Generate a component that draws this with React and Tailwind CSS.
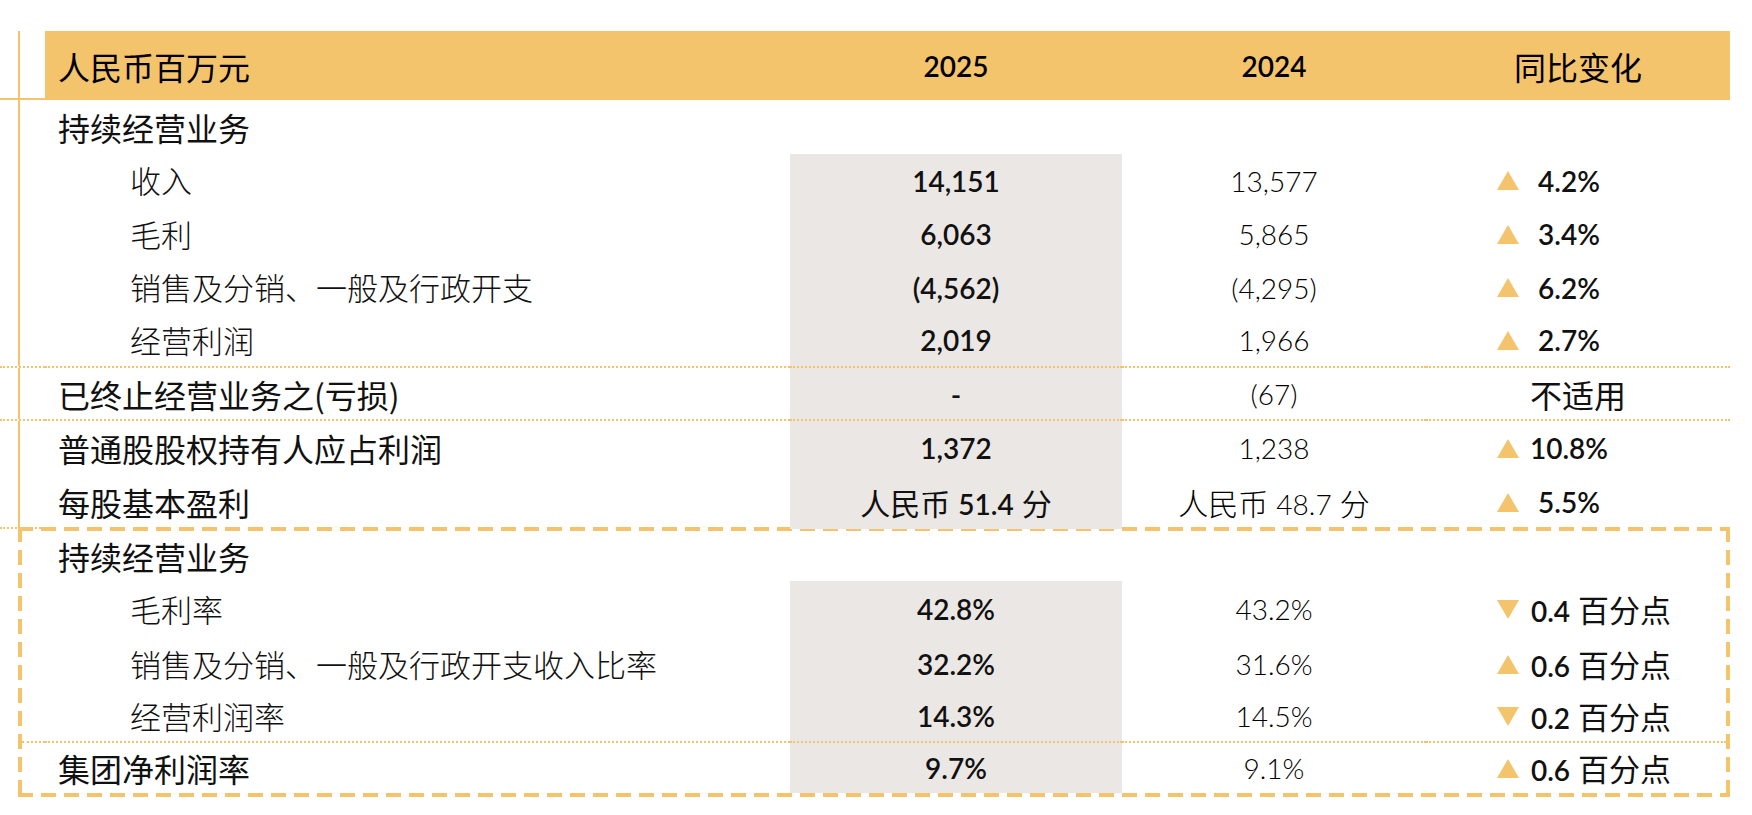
import React from 'react';

// colours taken from the slide
const LINE = 'border-b-2 border-dotted border-[#f4c46c]';
const NUM = "font-['Lato','Noto_Sans_CJK_SC',sans-serif] text-[28px]";
const CJK = "font-['Noto_Sans_CJK_SC',sans-serif]";

const Tri = ({ dir }) => (
    <svg width="22" height="19" viewBox="0 0 22 19" className="shrink-0">
        {dir === 'up' ? (
            <path d="M11 0 L22 19 L0 19 Z" fill="#f4c46c" />
        ) : (
            <path d="M0 0 L22 0 L11 19 Z" fill="#f4c46c" />
        )}
    </svg>
);

const Fen = ({ n, light }) => (
    <span className="flex items-baseline gap-[8px]">
        <span className={`${CJK} text-[30px] ${light ? 'font-light' : 'font-normal'}`}>人民币</span>
        <span>{n}</span>
        <span className={`${CJK} text-[30px] ${light ? 'font-light' : 'font-normal'}`}>分</span>
    </span>
);

const Pp = ({ n }) => (
    <span className="flex items-baseline gap-[8px] pl-[12px] font-semibold">
        <span>{n}</span>
        <span className={`${CJK} text-[31px] font-normal`}>百分点</span>
    </span>
);

const upper = [
    { label: '持续经营业务', h: 'h-[54px]' },
    { label: '收入', sub: true, gray: true, v25: '14,151', v24: '13,577', dir: 'up', chg: '4.2%', h: 'h-[53px]' },
    { label: '毛利', sub: true, gray: true, v25: '6,063', v24: '5,865', dir: 'up', chg: '3.4%', h: 'h-[54px]' },
    { label: '销售及分销、一般及行政开支', sub: true, gray: true, v25: '(4,562)', v24: '(4,295)', dir: 'up', chg: '6.2%', h: 'h-[53px]' },
    { label: '经营利润', sub: true, gray: true, v25: '2,019', v24: '1,966', dir: 'up', chg: '2.7%', h: 'h-[54px]', line: true },
    { label: '已终止经营业务之(亏损)', gray: true, v25: '-', v24: '(67)', na: true, h: 'h-[53px]', line: true },
    { label: '普通股股权持有人应占利润', gray: true, v25: '1,372', v24: '1,238', dir: 'up', chg: '10.8%', h: 'h-[54px]' },
    { label: '每股基本盈利', gray: true, v25: <Fen n="51.4" />, v24: <Fen n="48.7" light />, dir: 'up', chg: '5.5%', h: 'h-[54px]', edge: true },
];

const lower = [
    { label: '持续经营业务', h: 'h-[50px]' },
    { label: '毛利率', sub: true, gray: true, v25: '42.8%', v24: '43.2%', dir: 'down', pp: '0.4', h: 'h-[56px]' },
    { label: '销售及分销、一般及行政开支收入比率', sub: true, gray: true, v25: '32.2%', v24: '31.6%', dir: 'up', pp: '0.6', h: 'h-[54px]' },
    { label: '经营利润率', sub: true, gray: true, v25: '14.3%', v24: '14.5%', dir: 'down', pp: '0.2', h: 'h-[52px]', line: true },
    { label: '集团净利润率', gray: true, v25: '9.7%', v24: '9.1%', dir: 'up', pp: '0.6', h: 'h-[50px]' },
];

const Row = ({ r, cols, gutter }) => {
    const line = r.line ? LINE : '';
    return (
        <div className={`grid ${cols} ${r.h}`}>
            <div className={`flex ${r.line || r.edge ? LINE : ''}`}>
                {gutter && <div className="ml-[18px] w-[2px] bg-[#f4c46c]" />}
            </div>
            <div
                className={`flex items-center ${CJK} text-[#111] ${
                    r.sub ? 'pl-[85px] text-[31px] font-light' : 'pl-[13px] text-[32px]'
                } ${line}`}
            >
                {r.label}
            </div>
            <div
                className={`flex items-center justify-center ${NUM} font-semibold text-[#111] ${
                    r.gray ? 'bg-[#ebe7e4]' : ''
                } ${line}`}
            >
                {r.v25}
            </div>
            <div className={`flex items-center justify-center ${NUM} font-light text-black ${line}`}>
                {r.v24}
            </div>
            {r.na ? (
                <div className={`flex items-center justify-center ${CJK} text-[32px] text-[#111] ${line}`}>
                    不适用
                </div>
            ) : (
                <div className={`flex items-center pl-[71px] ${NUM} text-[#111] ${line}`}>
                    {r.dir && <Tri dir={r.dir} />}
                    {r.chg && <span className="w-[100px] text-center font-semibold">{r.chg}</span>}
                    {r.pp && <Pp n={r.pp} />}
                </div>
            )}
        </div>
    );
};

const App = () => {
    return (
        <div className="min-h-screen bg-white pt-[31px]">
            <div className="w-[1730px]">
                {/* Header band */}
                <div className="grid grid-cols-[45px_745px_332px_304px_304px] h-[69px]">
                    <div className="flex border-b-2 border-[#f4c46c]">
                        <div className="ml-[18px] w-[2px] bg-[#f4c46c]" />
                    </div>
                    <div className={`flex items-center pl-[13px] bg-[#f4c46c] ${CJK} text-[32px] text-black`}>
                        人民币百万元
                    </div>
                    <div className={`flex items-center justify-center bg-[#f4c46c] ${NUM} font-semibold text-black`}>
                        2025
                    </div>
                    <div className={`flex items-center justify-center bg-[#f4c46c] ${NUM} font-semibold text-black`}>
                        2024
                    </div>
                    <div className={`flex items-center justify-center bg-[#f4c46c] ${CJK} text-[32px] text-black`}>
                        同比变化
                    </div>
                </div>

                {/* Income statement rows */}
                {upper.map((r, i) => (
                    <Row key={i} r={r} gutter cols="grid-cols-[45px_745px_332px_304px_304px]" />
                ))}

                {/* Margin rows, framed with long dashes */}
                <div className="-mt-[2px] ml-[18px] p-[4px] [background-image:linear-gradient(90deg,#f4c46c_15px,transparent_15px),linear-gradient(90deg,#f4c46c_15px,transparent_15px),linear-gradient(180deg,#f4c46c_15px,transparent_15px),linear-gradient(180deg,#f4c46c_15px,transparent_15px)] [background-size:23px_4px,23px_4px,4px_23px,4px_23px] [background-position:0_0,0_100%,0_0,100%_0] [background-repeat:repeat-x,repeat-x,repeat-y,repeat-y]">
                    {lower.map((r, i) => (
                        <Row key={i} r={r} cols="grid-cols-[23px_745px_332px_304px_300px]" />
                    ))}
                </div>
            </div>
        </div>
    );
};

export default App;
